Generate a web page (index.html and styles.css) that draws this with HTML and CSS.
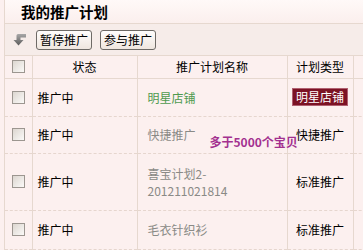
FILE: index.html
```html
<html>
    <head>
        <link rel="stylesheet" href="styles.css">
    </head>
    <body>
        <div class="panel">
            <h2 class="title">我的推广计划</h2>
            <div class="toolbar">
                <svg class="back-icon" width="13" height="13" viewBox="0 0 13 13">
                    <defs>
                        <linearGradient id="ig" x1="0" y1="0" x2="0" y2="1">
                            <stop offset="0" stop-color="#a8a8a8"/>
                            <stop offset="1" stop-color="#5a5a5a"/>
                        </linearGradient>
                    </defs>
                    <path d="M13 1 L13 4.5 L7.5 4.5 L7.5 7 L10.5 7 L5.5 12.5 L0.5 7 L3.5 7 L3.5 2.5 Q3.5 1 5 1 Z" fill="url(#ig)"/>
                </svg>
                <button class="btn">暂停推广</button>
                <button class="btn">参与推广</button>
            </div>
            <table class="plans">
                <colgroup>
                    <col class="c-check">
                    <col class="c-state">
                    <col class="c-name">
                    <col class="c-type">
                    <col class="c-extra">
                </colgroup>
                <thead>
                    <tr>
                        <th><span class="chk"></span></th>
                        <th>状态</th>
                        <th>推广计划名称</th>
                        <th>计划类型</th>
                        <th></th>
                    </tr>
                </thead>
                <tbody>
                    <tr class="r1">
                        <td class="check"><span class="chk"></span></td>
                        <td class="state">推广中</td>
                        <td class="name star">明星店铺</td>
                        <td class="type"><span class="tag">明星店铺</span></td>
                        <td></td>
                    </tr>
                    <tr class="r2">
                        <td class="check"><span class="chk"></span></td>
                        <td class="state">推广中</td>
                        <td class="name">快捷推广<span class="note">多于5000个宝贝</span></td>
                        <td class="type">快捷推广</td>
                        <td></td>
                    </tr>
                    <tr class="r3">
                        <td class="check"><span class="chk"></span></td>
                        <td class="state">推广中</td>
                        <td class="name">喜宝计划2-<br>201211021814</td>
                        <td class="type">标准推广</td>
                        <td></td>
                    </tr>
                    <tr class="r4">
                        <td class="check"><span class="chk"></span></td>
                        <td class="state">推广中</td>
                        <td class="name">毛衣针织衫</td>
                        <td class="type">标准推广</td>
                        <td></td>
                    </tr>
                </tbody>
            </table>
        </div>
    </body>
</html>
```

FILE: styles.css
```css
body {
    margin: 0;
    overflow: hidden;
    background-color: #fcf0ef;
    font-family: "Noto Sans CJK SC", sans-serif;
    font-size: 12px;
    color: #000;
}
.panel {
    margin-left: 4px;
    border-left: 1px solid #e6d8cf;
}
.title {
    margin: 0;
    height: 23px;
    padding-left: 16px;
    line-height: 23px;
    font-size: 14.5px;
    font-weight: bold;
    background: linear-gradient(#fff9f8, #fbefed);
    border-bottom: 1px solid #e6d8cf;
}
.toolbar {
    display: flex;
    align-items: center;
    height: 31px;
    padding-left: 8px;
    background-color: #f6ece9;
    border-bottom: 1px solid #e6d8cf;
}
.back-icon {
    margin-right: 10px;
}
.btn {
    height: 20px;
    margin-right: 8px;
    padding: 0 3px;
    font-family: "Noto Sans CJK SC", sans-serif;
    font-size: 12px;
    line-height: 18px;
    color: #000;
    border: 1px solid #6e6a66;
    border-radius: 3px;
    background: linear-gradient(#fffdfc, #efe6df);
}

.plans {
    width: 380px;
    table-layout: fixed;
    border-collapse: collapse;
    font-size: 12px;
}
.c-check { width: 27px; }
.c-state { width: 105px; }
.c-name { width: 150px; }
.c-type { width: 66px; }
.c-extra { width: 32px; }

.plans th, .plans td {
    padding: 0;
    border-left: 1px solid #e6d8cf;
    border-right: 1px solid #e6d8cf;
}
.plans th:first-child, .plans td:first-child {
    border-left: none;
}
.plans th {
    height: 22px;
    font-weight: normal;
    text-align: center;
    border-bottom: 1px solid #e6d8cf;
}
.plans td {
    border-bottom: 1px dashed #e6d6ce;
}
.r1 td { height: 38px; }
.r2 td { height: 37px; }
.r3 td { height: 57px; }
.r4 td { height: 39px; }

.chk {
    display: block;
    width: 11px;
    height: 11px;
    margin-left: 7px;
    border: 1px solid #9c9690;
    background: linear-gradient(135deg, #dcd6d0, #fbfaf8);
}
.state {
    padding-left: 5px !important;
}
.name {
    position: relative;
    padding-left: 10px !important;
    color: #8a8a86;
    line-height: 17px;
}
.name.star {
    color: #4e9a4e;
}
.note {
    position: absolute;
    left: 72px;
    top: 16px;
    font-weight: bold;
    color: #a3308f;
    white-space: nowrap;
}
.type {
    text-align: center;
}
.tag {
    display: inline-block;
    padding: 0 3px;
    line-height: 16px;
    color: #fff;
    background-color: #7c1224;
    border: 1px solid #b06070;
}
```
